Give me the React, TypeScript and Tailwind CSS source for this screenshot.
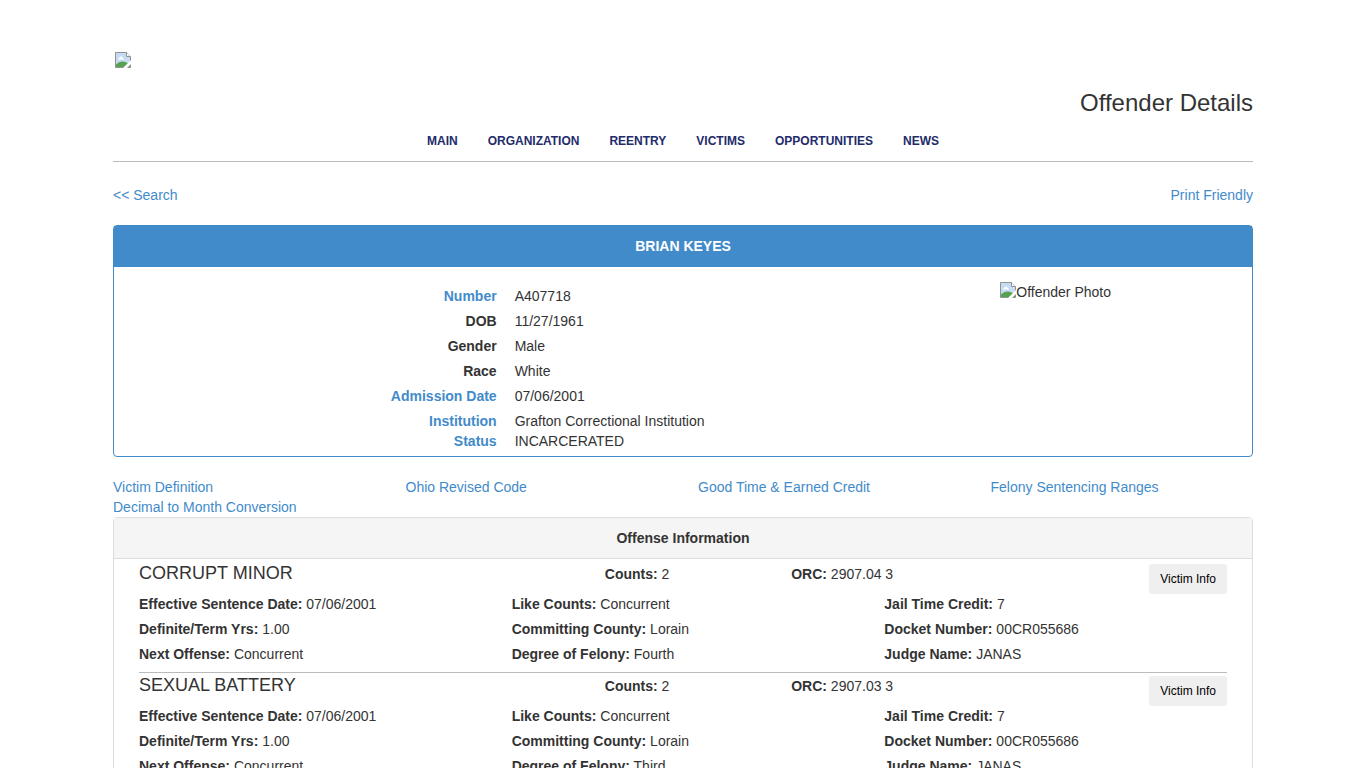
import React from 'react';

const navItems = ['MAIN', 'ORGANIZATION', 'REENTRY', 'VICTIMS', 'OPPORTUNITIES', 'NEWS'];

const details = [
  { label: 'Number', value: 'A407718', link: true },
  { label: 'DOB', value: '11/27/1961' },
  { label: 'Gender', value: 'Male' },
  { label: 'Race', value: 'White' },
  { label: 'Admission Date', value: '07/06/2001', link: true },
];

const statusDetails = [
  { label: 'Institution', value: 'Grafton Correctional Institution', link: true },
  { label: 'Status', value: 'INCARCERATED', link: true },
];

const resources = [
  'Victim Definition',
  'Ohio Revised Code',
  'Good Time & Earned Credit',
  'Felony Sentencing Ranges',
  'Decimal to Month Conversion',
];

const offenses = [
  { name: 'CORRUPT MINOR', counts: '2', orc: '2907.04 3', degree: 'Fourth' },
  { name: 'SEXUAL BATTERY', counts: '2', orc: '2907.03 3', degree: 'Third' },
];

const MissingImage: React.FC = () => (
  <svg width="16" height="16" viewBox="0 0 16 16" className="shrink-0" aria-hidden="true">
    <path d="M0.5 0.5H11.5L15.5 4.5V15.5H0.5Z" fill="#c6dcf5" />
    <path d="M3 7.5c0-1 .6-1.500 1.300-1.500.3-1 .9-1.500 1.700-1.500 1 0 1.600.6 1.700 1.500.7 0 1.100.5 1.100 1.500Z" fill="#fff" />
    <path d="M1 15V12.500C3 10.500 5 9.500 7.500 9.500S12 10.500 15 12.500V15Z" fill="#55a350" />
    <path d="M0.5 0.5H11.5L15.5 4.5V15.5H0.5Z" fill="none" stroke="#929292" />
    <path d="M11.500 0.500V4.500H15.500" fill="#fff" stroke="#929292" />
    {/* torn corner */}
    <path d="M8 16L16 8V12L12 16Z" fill="#fff" />
  </svg>
);

const DetailRow: React.FC<{ label: string; value: string; link?: boolean }> = ({ label, value, link }) => (
  <div className="grid grid-cols-2">
    <dt className="text-right font-bold">
      {link ? <a href="#" className="text-[#428bca]">{label}</a> : label}
    </dt>
    <dd className="pl-[18px]">{value}</dd>
  </div>
);

const Field: React.FC<{ label: string; value: string }> = ({ label, value }) => (
  <div className="px-[15px]">
    <strong>{label}:</strong> {value}
  </div>
);

const Header: React.FC = () => (
  <header className="border-b border-[#bbb] pt-[52px]">
    <div className="pl-[2px]">
      <MissingImage />
    </div>
    <h1 className="mt-[22px] text-right text-2xl leading-[26px]">Offender Details</h1>
    <nav className="flex justify-center gap-[30px] pt-[15px] pb-[10px] text-xs leading-5 font-bold text-[#232b6b]">
      {navItems.map((item) => (
        <a key={item} href="#">{item}</a>
      ))}
    </nav>
  </header>
);

const App: React.FC = () => {
  return (
    <div className="mx-auto max-w-[1170px] px-[15px] font-['Liberation_Sans',Arial,sans-serif] text-sm leading-5 text-[#333]">
      <Header />

      <div className="flex justify-between pt-[23px] pb-5 text-[#428bca]">
        <a href="#">&lt;&lt; Search</a>
        <a href="#">Print Friendly</a>
      </div>

      {/* Offender summary */}
      <section className="rounded border border-[#428bca]">
        <h2 className="bg-[#428bca] py-[10px] text-center leading-[21px] font-bold text-white">BRIAN KEYES</h2>
        <div className="grid grid-cols-3 px-[10px] pt-[15px] pb-[5px]">
          <dl className="col-span-2 pt-1">
            <div className="mb-[5px] flex flex-col gap-[5px]">
              {details.map((d) => (
                <DetailRow key={d.label} {...d} />
              ))}
            </div>
            {statusDetails.map((d) => (
              <DetailRow key={d.label} {...d} />
            ))}
          </dl>
          <div className="flex items-start justify-center">
            <MissingImage />
            <span>Offender Photo</span>
          </div>
        </div>
      </section>

      <div className="-mx-[15px] mt-5 grid grid-cols-4 text-[#428bca]">
        {resources.map((r) => (
          <div key={r} className="px-[15px]">
            <a href="#">{r}</a>
          </div>
        ))}
      </div>

      {/* Offenses */}
      <section className="rounded border border-[#ddd]">
        <h2 className="border-b border-[#ddd] bg-[#f5f5f5] py-[10px] text-center font-bold">Offense Information</h2>
        <div className="px-[10px] pt-[5px]">
          {offenses.map((o, i) => (
            <article key={o.name}>
              {i > 0 && <hr className="mx-[15px] mt-2 mb-[3px] border-[#bbb]" />}
              <div className="grid grid-cols-12">
                <h3 className="col-span-5 px-[15px] text-lg leading-[18px]">{o.name}</h3>
                <div className="col-span-2">
                  <Field label="Counts" value={o.counts} />
                </div>
                <div className="col-span-3">
                  <Field label="ORC" value={o.orc} />
                </div>
                <div className="col-span-2 flex justify-end px-[15px]">
                  <button type="button" className="h-[30px] rounded-[3px] bg-[#efefef] px-[11px] text-xs text-black">
                    Victim Info
                  </button>
                </div>
              </div>
              <div className="grid grid-cols-3 gap-y-[5px]">
                <Field label="Effective Sentence Date" value="07/06/2001" />
                <Field label="Like Counts" value="Concurrent" />
                <Field label="Jail Time Credit" value="7" />
                <Field label="Definite/Term Yrs" value="1.00" />
                <Field label="Committing County" value="Lorain" />
                <Field label="Docket Number" value="00CR055686" />
                <Field label="Next Offense" value="Concurrent" />
                <Field label="Degree of Felony" value={o.degree} />
                <Field label="Judge Name" value="JANAS" />
              </div>
            </article>
          ))}
        </div>
      </section>
    </div>
  );
};

export default App;
